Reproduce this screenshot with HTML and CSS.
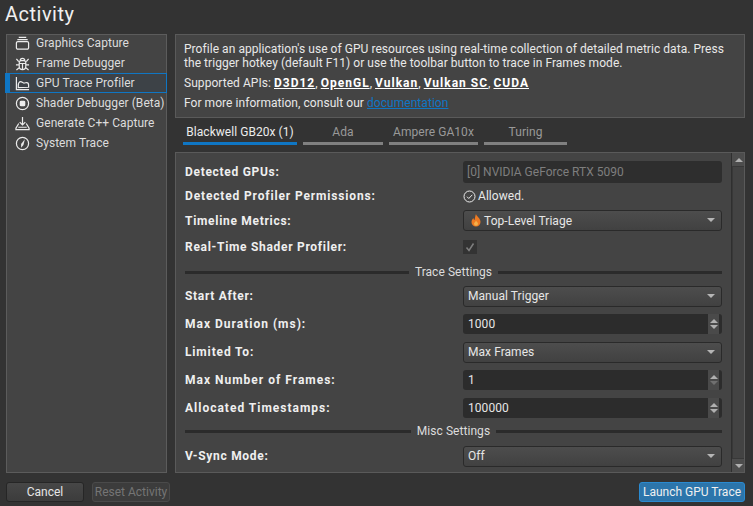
FILE: index.html
```html
<!DOCTYPE html>
<html>
<head>
  <title>Activity</title>
  <link rel="stylesheet" href="styles.css">
</head>
<body>
  <div class="title">Activity</div>

  <div class="main">
    <!-- Activity list -->
    <div class="activities">
      <div class="activity">
        <svg class="icon" viewBox="0 0 16 16"><path d="M4 1.500h8M2.500 3.800h11M1.500 7.500a1.500 1.500 0 0 1 1.500-1.500h10a1.500 1.500 0 0 1 1.500 1.500v5a1.500 1.500 0 0 1-1.500 1.500H3a1.500 1.500 0 0 1-1.500-1.500z"/></svg>
        Graphics Capture
      </div>
      <div class="activity">
        <svg class="icon" viewBox="0 0 16 16"><path d="M5.500 5h5l1 2v4a3.500 3.500 0 0 1-7 0V7zM5.500 5a2.500 2.500 0 0 1 5 0M4.500 8h7M8 8v6M1.500 3l2.500 3M14.500 3l-2.500 3M1 9.500h3.500M15 9.500h-3.500M1.500 15l3-2.500M14.500 15l-3-2.500"/></svg>
        Frame Debugger
      </div>
      <div class="activity selected">
        <svg class="icon" viewBox="0 0 16 16"><path d="M1.500 1v13.500H15M3.500 12.500V9.500c0-1.500 1-3.500 2.500-3.500s2 1.500 3.500 1.500 2-.5 3-.5 2 1 2 2.500v2.500z"/></svg>
        GPU Trace Profiler
      </div>
      <div class="activity">
        <svg class="icon" viewBox="0 0 16 16"><circle cx="8" cy="8" r="6.500"/><rect class="solid" x="5" y="5" width="6" height="6" rx="1.500"/></svg>
        Shader Debugger (Beta)
      </div>
      <div class="activity">
        <svg class="icon" viewBox="0 0 16 16"><path d="M8 1v8M5 6.500 8 9.500l3-3M4 8 1 13v1.500h14V13l-3-5M3.500 12h9"/></svg>
        Generate C++ Capture
      </div>
      <div class="activity">
        <svg class="icon" viewBox="0 0 16 16"><circle cx="8" cy="8" r="6.500"/><path class="solid" d="M10.500 3.500 9 9.500 6.500 12.500 6.500 8.500z"/></svg>
        System Trace
      </div>
    </div>

    <div class="content">
      <div class="info">
        <p class="blurb">Profile an application's use of GPU resources using real-time collection of detailed metric data. Press the trigger hotkey (default F11) or use the toolbar button to trace in Frames mode.</p>
        <p>Supported APIs: <b>D3D12</b>, <b>OpenGL</b>, <b>Vulkan</b>, <b>Vulkan SC</b>, <b>CUDA</b></p>
        <p>For more information, consult our <a href="#">documentation</a></p>
      </div>

      <div class="tabs">
        <div class="tab current">Blackwell GB20x (1)</div>
        <div class="tab tab-ada">Ada</div>
        <div class="tab tab-ampere">Ampere GA10x</div>
        <div class="tab tab-turing">Turing</div>
      </div>

      <div class="panel">
        <div class="form">
          <div class="row r-gpu">
            <label>Detected GPUs:</label>
            <div class="field muted">[0] NVIDIA GeForce RTX 5090</div>
          </div>
          <div class="row r-perm">
            <label class="wide-s">Detected Profiler Permissions:</label>
            <div class="allowed">
              <svg class="check-icon" viewBox="0 0 13 13"><circle cx="6.500" cy="6.500" r="5.500"/><path d="M4 6.700 5.800 8.500 9.300 4.800"/></svg>
              Allowed.
            </div>
          </div>
          <div class="row r-combo-tall">
            <label>Timeline Metrics:</label>
            <div class="combo">
              <svg class="flame" viewBox="0 0 10 13"><path d="M5 0c.5 2.500 4.500 4 4.500 8A4.500 4.500 0 0 1 .5 8C.5 6 1.500 5 2.500 4c0 1 .4 1.600 1 2C4 4.500 4.200 2 5 0z"/><path class="flame-in" d="M5 6.500c.3 1 2 1.800 2 3.300a2 2 0 0 1-4 0C3 8.500 4.600 8 5 6.500z"/></svg>
              Top-Level Triage
            </div>
          </div>
          <div class="row r-check">
            <label>Real-Time Shader Profiler:</label>
            <div class="checkbox"><svg viewBox="0 0 14 14"><path d="M3.500 7.500 6 10.500l4.500-7"/></svg></div>
          </div>
          <div class="section r-sec1"><span class="line"></span><span>Trace Settings</span><span class="line"></span></div>
          <div class="row r-28">
            <label>Start After:</label>
            <div class="combo">Manual Trigger</div>
          </div>
          <div class="row r-28">
            <label class="wide">Max Duration (ms):</label>
            <div class="spin">1000<span class="arrows"><i class="up"></i><i class="down"></i></span></div>
          </div>
          <div class="row r-28">
            <label class="wide-s">Limited To:</label>
            <div class="combo">Max Frames</div>
          </div>
          <div class="row r-28">
            <label class="wide">Max Number of Frames:</label>
            <div class="spin">1<span class="arrows"><i class="up"></i><i class="down dim"></i></span></div>
          </div>
          <div class="row r-28">
            <label class="wide">Allocated Timestamps:</label>
            <div class="spin">100000<span class="arrows"><i class="up"></i><i class="down"></i></span></div>
          </div>
          <div class="section r-sec2"><span class="line"></span><span>Misc Settings</span><span class="line"></span></div>
          <div class="row r-28">
            <label>V-Sync Mode:</label>
            <div class="combo">Off</div>
          </div>
        </div>
        <div class="scrollbar">
          <div class="sb-btn"><i class="up"></i></div>
          <div class="sb-track"></div>
          <div class="sb-btn"><i class="down"></i></div>
        </div>
      </div>
    </div>
  </div>

  <div class="footer">
    <button class="btn cancel">Cancel</button>
    <button class="btn reset">Reset Activity</button>
    <button class="btn launch">Launch GPU Trace</button>
  </div>
</body>
</html>
```

FILE: styles.css
```css
body {
  margin: 0;
  width: 753px;
  height: 506px;
  overflow: hidden;
  background-color: #333333;
  color: #e6e6e6;
  font-family: Roboto, "Liberation Sans", sans-serif;
  font-size: 12px;
  letter-spacing: 0.05px;
  display: flex;
  flex-direction: column;
}
.title {
  height: 34px;
  padding-left: 5px;
  font-size: 20px;
  line-height: 28px;
  color: #f0f0f0;
  letter-spacing: 0.5px;
}
.main {
  display: flex;
  height: 439px;
  padding-left: 6px;
  gap: 8px;
}

/* left list */
.activities {
  width: 159px;
  background-color: #444444;
  border: 1px solid #5c5c5c;
  display: flex;
  flex-direction: column;
  align-items: stretch;
  height: 437px;
}
.activity {
  height: 20px;
  display: flex;
  align-items: center;
  gap: 6px;
  padding-left: 8px;
  color: #dcdcdc;
  white-space: nowrap;
}
.activity:first-child {
  margin-top: -2px;
}
.activity.selected {
  height: 18px;
  border: 1px solid #0f76c4;
  border-left: 5px solid #0f76c4;
  padding-left: 5px;
  background-color: #3d4247;
  margin-left: -2px;
  margin-right: -1px;
}
.icon {
  width: 15px;
  height: 15px;
  flex: none;
  fill: none;
  stroke: #ececec;
  stroke-width: 1.300;
}
.icon .solid {
  fill: #ececec;
  stroke: none;
}

/* right side */
.content {
  width: 570px;
  display: flex;
  flex-direction: column;
}
.info {
  height: 84px;
  box-sizing: border-box;
  padding: 7px 8px 0;
  background-color: #444444;
  border: 1px solid #5a5a5a;
  color: #e8e8e8;
  line-height: 14px;
}
.info p {
  margin: 0 0 6px;
}
.info b {
  color: #ffffff;
  text-decoration: underline;
  letter-spacing: 1px;
}
.info a {
  color: #0f76c4;
}
.tabs {
  height: 34px;
  box-sizing: border-box;
  padding: 2px 0 0 8px;
  display: flex;
  gap: 6px;
}
.tab {
  height: 25px;
  padding-top: 5px;
  box-sizing: border-box;
  text-align: center;
  color: #999999;
  border-bottom: 3px solid #808080;
  line-height: 15px;
}
.tab.current {
  width: 114px;
  color: #ececec;
  border-bottom-color: #0f76c4;
}
.tab-ada {
  width: 80px;
}
.tab-ampere {
  width: 89px;
}
.tab-turing {
  width: 83px;
}
.panel {
  display: flex;
  height: 321px;
  background-color: #444444;
  border: 1px solid #5a5a5a;
  box-sizing: border-box;
  overflow: hidden;
}
.form {
  width: 555px;
  flex: none;
  padding: 8px 9px 0;
  box-sizing: border-box;
}
.row {
  display: grid;
  grid-template-columns: 278px 259px;
  align-items: center;
}
.row label {
  font-weight: 700;
  color: #efefef;
  letter-spacing: 0.7px;
}
.row label.wide-s {
  letter-spacing: 0.85px;
}
.row label.wide {
  letter-spacing: 1px;
}
.r-gpu {
  height: 22px;
}
.r-perm {
  height: 26px;
}
.r-combo-tall {
  height: 23px;
}
.r-check {
  height: 30px;
}
.r-28 {
  height: 28px;
}
.r-sec1 {
  height: 20px;
}
.r-sec2 {
  height: 18px;
  margin-bottom: 2px;
}
.section {
  display: flex;
  align-items: center;
  gap: 6px;
  color: #dcdcdc;
}
.section .line {
  flex: 1;
  height: 3px;
  background-color: #2b2b2b;
}
.field {
  height: 22px;
  line-height: 22px;
  padding-left: 4px;
  background-color: #2e2e2e;
  border-radius: 3px;
}
.muted {
  color: #7e7e7e;
  letter-spacing: 0;
}
.allowed {
  display: flex;
  align-items: center;
  gap: 2px;
  color: #e8e8e8;
}
.check-icon {
  width: 13px;
  height: 13px;
  fill: none;
  stroke: #ececec;
  stroke-width: 1;
}
.combo {
  position: relative;
  height: 21px;
  padding-left: 4px;
  box-sizing: border-box;
  display: flex;
  align-items: center;
  gap: 3px;
  background: linear-gradient(#4d4d4d, #414141);
  border: 1px solid #2a2a2a;
  border-radius: 3px;
  color: #e6e6e6;
}
.combo::after {
  content: "";
  position: absolute;
  right: 6px;
  top: 7px;
  border-left: 4px solid transparent;
  border-right: 4px solid transparent;
  border-top: 4px solid #b5b5b5;
}
.flame {
  width: 10px;
  height: 13px;
  margin-left: 3px;
  fill: #ee7a22;
}
.flame .flame-in {
  fill: #f5b04a;
}
.checkbox {
  width: 14px;
  height: 14px;
  background-color: #333333;
}
.checkbox svg {
  display: block;
  fill: none;
  stroke: #7f7f7f;
  stroke-width: 1.500;
}
.spin {
  position: relative;
  height: 20px;
  line-height: 20px;
  padding-left: 5px;
  background-color: #2c2c2c;
  border-radius: 3px;
  color: #e6e6e6;
}
.arrows {
  position: absolute;
  right: 3px;
  top: 0;
  width: 11px;
  height: 20px;
  display: flex;
  flex-direction: column;
  align-items: center;
  justify-content: center;
  gap: 2px;
  background-color: #4a4a4a;
}
i.up, i.down {
  display: block;
  width: 0;
  height: 0;
  border-left: 4px solid transparent;
  border-right: 4px solid transparent;
}
i.up {
  border-bottom: 4px solid #b0b0b0;
}
i.down {
  border-top: 4px solid #b0b0b0;
}
i.down.dim {
  border-top-color: #707070;
}
.scrollbar {
  width: 13px;
  flex: none;
  display: flex;
  flex-direction: column;
  background-color: #3a3a3a;
  border-left: 1px solid #2f2f2f;
}
.sb-btn {
  height: 13px;
  display: flex;
  align-items: center;
  justify-content: center;
  background-color: #4d4d4d;
}
.sb-track {
  flex: 1;
  background-color: #434343;
  border: 1px solid #383838;
}

/* bottom buttons */
.footer {
  display: flex;
  padding: 9px 8px 0 6px;
  gap: 8px;
}
.btn {
  height: 20px;
  padding: 0;
  font-family: inherit;
  font-size: 12px;
  border: 1px solid #262626;
  border-radius: 3px;
  background: linear-gradient(#474747, #3c3c3c);
  color: #e6e6e6;
}
.cancel {
  width: 78px;
}
.reset {
  width: 78px;
  color: #757575;
  background: #3c3c3c;
  border-color: #4a4a4a;
}
.launch {
  width: 106px;
  margin-left: auto;
  background-color: #2c75ab;
  background-image: none;
  border-color: #2a8ad0;
  color: #f0f0f0;
}
```
